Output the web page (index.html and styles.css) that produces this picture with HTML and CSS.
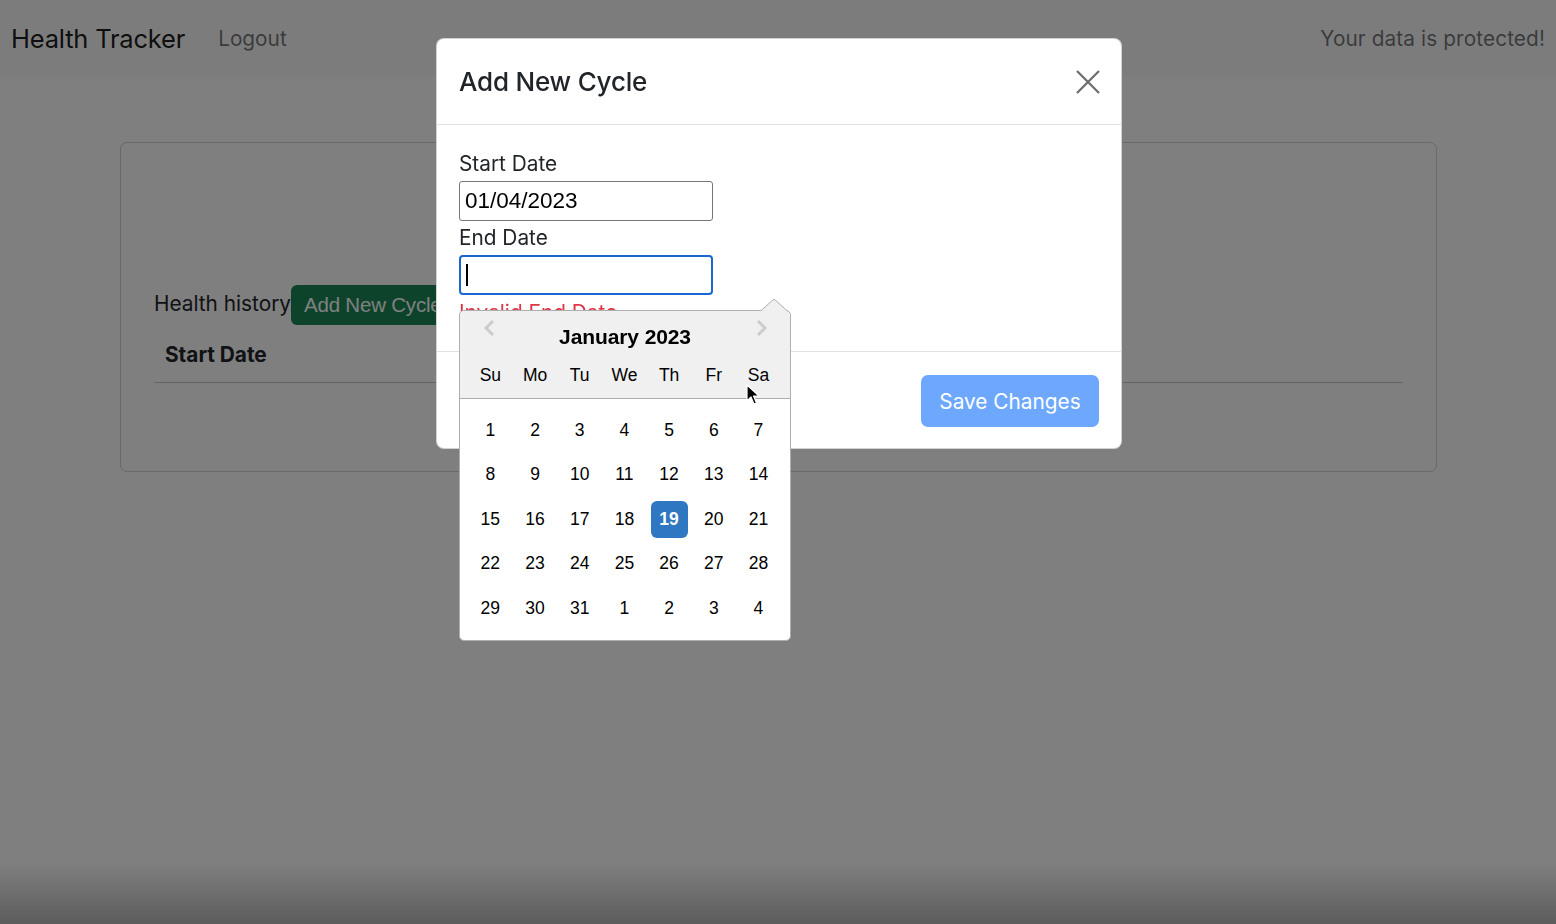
FILE: index.html
```html
<!DOCTYPE html>
<html>
<head>
<meta charset="utf-8">
<link rel="stylesheet" href="styles.css">
</head>
<body>
<nav class="navbar">
  <div class="nav-left">
    <span class="brand">Health Tracker</span>
    <span class="nav-link">Logout</span>
  </div>
  <span class="nav-text">Your data is protected!</span>
</nav>

<main class="main">
  <div class="card">
    <div class="card-spacer"></div>
    <div class="history-row">
      <span class="history-label">Health history</span>
      <button class="btn-green">Add New Cycle</button>
    </div>
    <table class="table">
      <thead><tr><th>Start Date</th><th></th></tr></thead>
    </table>
  </div>
</main>

<div class="backdrop"></div>

<div class="modal">
  <div class="modal-header">
    <h4 class="modal-title">Add New Cycle</h4>
    <svg class="close" width="24" height="24" viewBox="0 0 24 24"><path d="M1 1 L23 23 M23 1 L1 23" stroke="#6c6c6c" stroke-width="2.2" fill="none"/></svg>
  </div>
  <div class="modal-body">
    <label class="label">Start Date</label>
    <div class="input">01/04/2023</div>
    <label class="label">End Date</label>
    <div class="picker-wrap">
      <div class="input focus"><span class="caret"></span></div>
      <div class="invalid">Invalid End Date</div>
      <div class="datepicker">
        <svg class="dp-arrow" width="28" height="14" viewBox="0 0 28 14"><path d="M0 13.5 L14 1 L28 13.5" fill="#f0f0f0" stroke="#aeaeae" stroke-width="1"/></svg>
        <div class="dp-header">
          <div class="dp-title-row">
            <svg class="nav-prev" width="12" height="18" viewBox="0 0 12 18"><path d="M10 2 L3 9 L10 16" stroke="#ccc" stroke-width="3" fill="none"/></svg>
            <span class="dp-title">January 2023</span>
            <svg class="nav-next" width="12" height="18" viewBox="0 0 12 18"><path d="M2 2 L9 9 L2 16" stroke="#ccc" stroke-width="3" fill="none"/></svg>
          </div>
          <div class="dp-names">
            <span>Su</span><span>Mo</span><span>Tu</span><span>We</span><span>Th</span><span>Fr</span><span>Sa</span>
          </div>
        </div>
        <div class="dp-grid">
          <span class="day">1</span><span class="day">2</span><span class="day">3</span><span class="day">4</span><span class="day">5</span><span class="day">6</span><span class="day">7</span>
          <span class="day">8</span><span class="day">9</span><span class="day">10</span><span class="day">11</span><span class="day">12</span><span class="day">13</span><span class="day">14</span>
          <span class="day">15</span><span class="day">16</span><span class="day">17</span><span class="day">18</span><span class="day selected">19</span><span class="day">20</span><span class="day">21</span>
          <span class="day">22</span><span class="day">23</span><span class="day">24</span><span class="day">25</span><span class="day">26</span><span class="day">27</span><span class="day">28</span>
          <span class="day">29</span><span class="day">30</span><span class="day">31</span><span class="day">1</span><span class="day">2</span><span class="day">3</span><span class="day">4</span>
        </div>
        <svg class="cursor" width="14" height="22" viewBox="0 0 14 22"><path d="M1 1 L1 17 L5 13 L8 20 L10.5 19 L7.5 12 L13 12 Z" fill="#000" stroke="#fff" stroke-width="1.2" stroke-linejoin="round"/></svg>
      </div>
    </div>
  </div>
  <div class="modal-footer">
    <button class="btn-save">Save Changes</button>
  </div>
</div>

<div class="bottom-shade"></div>
</body>
</html>
```

FILE: styles.css
```css
* { box-sizing: border-box; }
html, body { margin: 0; padding: 0; }
body {
  background: #fff;
  font-family: Inter, "Liberation Sans", sans-serif;
  color: #212529;
  width: 1556px;
  height: 924px;
  overflow: hidden;
  position: relative;
}

.navbar {
  height: 76px;
  background: #f8f9fa;
  display: flex;
  align-items: center;
  justify-content: space-between;
  padding: 0 11px;
}
.nav-left { display: flex; align-items: center; gap: 33px; }
.brand { font-size: 25.5px; color: rgba(0,0,0,.9); letter-spacing: -0.2px; }
.nav-link { font-size: 20.8px; color: rgba(0,0,0,.55); }
.nav-text { font-size: 20.8px; color: rgba(0,0,0,.55); letter-spacing: 0.1px; }

.main { padding: 66px 119px 0 120px; }
.card {
  border: 1px solid rgba(0,0,0,.175);
  border-radius: 7px;
  padding: 0 33px;
  height: 330px;
}
.card-spacer { height: 142px; }
.history-row { display: flex; align-items: center; height: 40px; }
.history-label { font-size: 20.8px; color: #212529; position: relative; top: -2px; }
.btn-green {
  background: #198754;
  color: #fff;
  border: none;
  border-radius: 6px;
  height: 40px;
  padding: 0 13px;
  font-family: "Liberation Sans", Arial, sans-serif;
  font-size: 20.5px;
  letter-spacing: -0.2px;
}
.table { width: 100%; border-collapse: collapse; margin-top: 4px; }
.table th {
  text-align: left;
  font-size: 20.8px;
  font-weight: 700;
  padding: 13px 11px 15px;
  border-bottom: 1.3px solid #c8c9ca;
}

.backdrop {
  position: fixed;
  inset: 0;
  background: rgba(0,0,0,.5);
}

.modal {
  position: absolute;
  left: 436px;
  top: 38px;
  width: 686px;
  height: 411px;
  background: #fff;
  border: 1px solid rgba(0,0,0,.175);
  border-radius: 8px;
  display: flex;
  flex-direction: column;
}
.modal-header {
  height: 86px;
  display: flex;
  align-items: center;
  justify-content: space-between;
  padding: 0 21px 0 22px;
  border-bottom: 1px solid #dee2e6;
}
.modal-title { margin: 0; font-size: 26px; font-weight: 500; color: #212529; letter-spacing: -0.2px; }

.modal-body {
  padding: 23px 22px 0;
  height: 227px;
  border-bottom: 1px solid #dee2e6;
}
.label { display: block; font-size: 20.8px; line-height: 32px; margin-bottom: 1px; color: #212529; }
.input {
  width: 254px;
  height: 40px;
  border: 1px solid #767676;
  border-radius: 3px;
  font-family: "Liberation Sans", Arial, sans-serif;
  font-size: 22.5px;
  line-height: 38px;
  padding: 0 5px;
  color: #000;
  margin-bottom: 1px;
}
.input.focus {
  border: 2px solid #1a66d2;
  border-radius: 4px;
  margin-bottom: 0;
  display: flex;
  align-items: center;
  padding-left: 5px;
}
.caret { width: 1.5px; height: 22px; background: #000; display: block; }
.picker-wrap { position: relative; }
.invalid {
  font-size: 20.8px;
  line-height: 1.2;
  color: #dc3545;
  margin-top: 6px;
}

.datepicker {
  position: absolute;
  left: 0;
  top: 55px;
  width: 332px;
  height: 331px;
  background: #fff;
  border: 1px solid #aeaeae;
  border-radius: 5px;
  font-family: "Liberation Sans", Arial, sans-serif;
  color: #000;
}
.dp-arrow { position: absolute; right: 2px; top: -13px; }
.dp-header {
  background: #f0f0f0;
  border-bottom: 1px solid #aeaeae;
  border-radius: 5px 5px 0 0;
  height: 88px;
  padding-top: 10px;
  position: relative;
}
.dp-title-row { height: 32px; display: flex; justify-content: center; align-items: center; position: relative; }
.dp-title { font-weight: 700; font-size: 21px; letter-spacing: -0.1px; }
.nav-prev { position: absolute; left: 23px; top: -2px; }
.nav-next { position: absolute; right: 22px; top: -2px; }
.dp-names {
  display: grid;
  grid-template-columns: repeat(7, 44.7px);
  padding: 0 8px;
  margin-top: 7px;
  line-height: 30px;
  font-size: 17.5px;
  text-align: center;
}
.dp-grid {
  display: grid;
  grid-template-columns: repeat(7, 44.7px);
  grid-auto-rows: 44.5px;
  padding: 9px 8px 0;
  font-size: 17.5px;
}
.day { display: flex; align-items: center; justify-content: center; }
.selected {
  background: #2f78c1;
  color: #fff;
  font-weight: 700;
  width: 37px;
  height: 37px;
  border-radius: 6px;
  justify-self: center;
  align-self: center;
}
.cursor { position: absolute; left: 286px; top: 73px; }

.modal-footer {
  flex: 1;
  display: flex;
  justify-content: flex-end;
  align-items: center;
  padding: 0 22px 0 0;
}
.btn-save {
  background: #0d6efd;
  opacity: .6;
  color: #fff;
  border: none;
  border-radius: 7px;
  height: 52px;
  width: 178px;
  font-family: inherit;
  font-size: 20.8px;
  margin-top: 2px;
}

.bottom-shade {
  position: fixed;
  left: 0; right: 0; bottom: 0;
  height: 60px;
  background: linear-gradient(to bottom, rgba(0,0,0,0), rgba(0,0,0,.27));
}
```
